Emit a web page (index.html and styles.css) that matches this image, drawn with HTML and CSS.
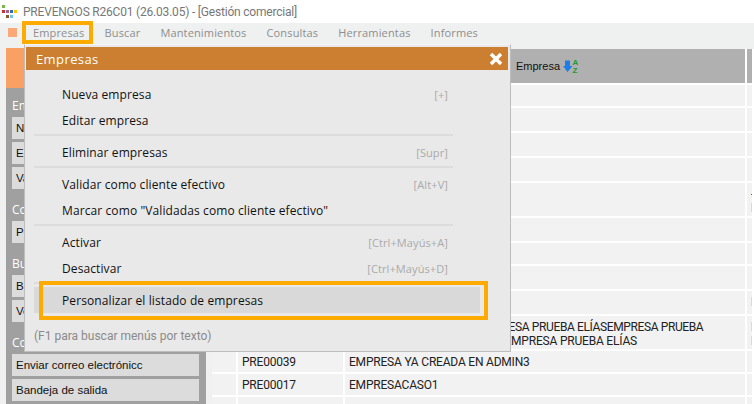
FILE: index.html
```html
<!DOCTYPE html>
<html lang="es">
  <head>
    <meta charset="UTF-8" />
    <title>PREVENGOS</title>
    <link rel="stylesheet" href="styles.css">
  </head>
  <body>
    <div class="titlebar">
      <svg class="logo" width="18" height="18" viewBox="0 0 18 18">
        <rect x="2" y="3" width="3" height="3" fill="#7ab648" />
        <rect x="2" y="8" width="3" height="3" fill="#c8332b" />
        <rect x="6" y="8" width="3" height="3" fill="#a0609c" />
        <rect x="10" y="8" width="3" height="3" fill="#2a6fa8" />
        <rect x="14" y="8" width="3" height="3" fill="#f8c800" />
        <rect x="6" y="13" width="3" height="3" fill="#8c5a2b" />
        <rect x="10" y="13" width="3" height="3" fill="#70c4ec" />
      </svg>
      <span>PREVENGOS R26C01 (26.03.05) - [Gestión comercial]</span>
    </div>

    <div class="menubar">
      <i class="menu-mark"></i>
      <span class="menu-item">Empresas</span>
      <span class="menu-item">Buscar</span>
      <span class="menu-item">Mantenimientos</span>
      <span class="menu-item">Consultas</span>
      <span class="menu-item">Herramientas</span>
      <span class="menu-item">Informes</span>
    </div>

    <div class="main">
      <div class="side">
        <div class="side-head"></div>
        <div class="side-body">
          <h6>Empresas</h6>
          <button>Nueva empresa</button>
          <button>Editar empresa</button>
          <button>Validar</button>
          <h6>Consultas</h6>
          <button>Personalizar</button>
          <h6>Buscar</h6>
          <button>Buscar</button>
          <button>Ver</button>
          <h6>Correo</h6>
          <button>Enviar correo electrónicc</button>
          <button>Bandeja de salida</button>
        </div>
      </div>

      <div class="grid">
        <div class="row head">
          <div></div><div></div>
          <div class="head-name">Empresa
            <svg class="sort" width="15" height="16" viewBox="0 0 15 16">
              <path d="M2 2.500h5v5.500h2.500l-5 6L0 8h2z" fill="#1e7ee8" />
              <text x="9.500" y="7" class="sort-az">A</text>
              <text x="9.500" y="15" class="sort-az">Z</text>
            </svg>
          </div>
          <div></div>
        </div>
        <div class="row h23"><div></div><div></div><div></div><div></div></div>
        <div class="row"><div></div><div></div><div></div><div></div></div>
        <div class="row"><div></div><div></div><div></div><div></div></div>
        <div class="row"><div></div><div></div><div></div><div></div></div>
        <div class="row h35"><div></div><div></div><div></div><div>-<br>P</div></div>
        <div class="row"><div></div><div></div><div></div><div></div></div>
        <div class="row h23"><div></div><div></div><div></div><div></div></div>
        <div class="row"><div></div><div></div><div></div><div></div></div>
        <div class="row"><div></div><div></div><div></div><div>E</div></div>
        <div class="row h35">
          <div></div><div></div>
          <div>
            <span class="line-one">EMPRESA PRUEBA ELÍASEMPRESA PRUEBA ELÍASEMPRESA PRUEBA</span>
            <span class="line-two">ELÍASEMPRESA PRUEBA EMPRESA PRUEBA ELÍAS</span>
          </div>
          <div>E<br>E</div>
        </div>
        <div class="row h23"><div></div><div>PRE00039</div><div>EMPRESA YA CREADA EN ADMIN3</div><div></div></div>
        <div class="row h23"><div></div><div>PRE00017</div><div>EMPRESACASO1</div><div></div></div>
        <div class="row h23"><div></div><div></div><div></div><div></div></div>
      </div>
    </div>

    <div class="popup">
      <div class="popup-title">
        <span>Empresas</span>
        <svg width="14" height="14" viewBox="0 0 14 14"><path d="M2 2l10 10M12 2L2 12" stroke="#fff" stroke-width="3.500" /></svg>
      </div>
      <div class="popup-body">
        <div class="group">
          <div class="opt"><span>Nueva empresa</span><kbd>[+]</kbd></div>
          <div class="opt"><span>Editar empresa</span></div>
        </div>
        <div class="group">
          <div class="opt"><span>Eliminar empresas</span><kbd>[Supr]</kbd></div>
        </div>
        <div class="group">
          <div class="opt"><span>Validar como cliente efectivo</span><kbd>[Alt+V]</kbd></div>
          <div class="opt"><span>Marcar como "Validadas como cliente efectivo"</span></div>
        </div>
        <div class="group">
          <div class="opt"><span>Activar</span><kbd>[Ctrl+Mayús+A]</kbd></div>
          <div class="opt"><span>Desactivar</span><kbd>[Ctrl+Mayús+D]</kbd></div>
        </div>
        <div class="opt selected"><span>Personalizar el listado de empresas</span></div>
        <div class="hint">(F1 para buscar menús por texto)</div>
      </div>
    </div>

    <div class="mark mark-menu"></div>
    <div class="mark mark-opt"></div>
  </body>
</html>
```

FILE: styles.css
```css
* {
  box-sizing: border-box;
}

html,
body {
  margin: 0;
  height: 404px;
  overflow: hidden;
}

body {
  position: relative;
  background: #f0f0f0;
  font-family: "Open Sans", sans-serif;
  font-size: 12px;
  color: #111;
}

.titlebar {
  display: flex;
  align-items: center;
  gap: 5px;
  height: 23px;
  background: #fff;
  color: #777;
  font-family: Roboto, sans-serif;
  font-size: 12px;
  letter-spacing: -0.2px;
}

.logo {
  align-self: flex-start;
  margin-top: 2px;
}

.menubar {
  display: flex;
  align-items: center;
  height: 24px;
  padding: 0 0 6px 8px;
  gap: 20px;
  background: #eff0f0;
  color: #8e8e8e;
  font-size: 11px;
  letter-spacing: 0.15px;
}

.menu-mark {
  width: 9px;
  height: 9px;
  margin-right: -4px;
  background: #fca877;
}

.main {
  display: flex;
  padding: 1px 0 0 6px;
}

.side {
  width: 200px;
  flex-shrink: 0;
}

.side-head {
  height: 40px;
  background: #f9a163;
}

.side-body {
  height: 316px;
  padding: 0 6px;
  background: #a0a0a0;
}

.side-body h6 {
  margin: 0;
  height: 29px;
  padding-top: 9px;
  color: #fff;
  font-size: 12px;
  font-weight: 400;
}

.side-body button {
  display: block;
  width: 187px;
  height: 22px;
  margin-bottom: 3px;
  padding: 0 0 0 4px;
  border: 0;
  background: #dcdcdc;
  color: #111;
  font: 11.500px "Liberation Sans", sans-serif;
  text-align: left;
}

.grid {
  flex: 1;
  margin-left: 6px;
  padding-top: 1px;
  color: #222;
  font-family: Roboto, sans-serif;
  font-size: 12px;
  letter-spacing: -0.2px;
}

.row {
  display: grid;
  grid-template-columns: 26px 107px 402px 1fr;
  height: 25px;
  border-bottom: 2px solid #fff;
}

.row > div {
  padding: 4px 0 0 4px;
  background: #f2f2f2;
  border-right: 2px solid #fff;
  line-height: 14px;
  white-space: nowrap;
  overflow: hidden;
}

.line-one,
.line-two {
  display: block;
}

.line-one {
  letter-spacing: -0.38px;
}

.line-two {
  padding-left: 23px;
}

.row.head {
  height: 36px;
}

.row.head > div {
  background: #b0b0b0;
}

.row.head > .head-name {
  display: flex;
  justify-content: center;
  align-items: center;
  gap: 3px;
  padding: 0 0 0 4px;
  color: #111;
  font: 11px "Liberation Sans", sans-serif;
  letter-spacing: 0;
}

.row.h23 {
  height: 23px;
}

.row.h35 {
  height: 35px;
}

.sort-az {
  fill: #1a9c2e;
  font: 700 8px "Liberation Sans", sans-serif;
}

.popup {
  position: absolute;
  left: 24px;
  top: 44px;
  width: 487px;
  height: 308px;
  padding: 2px 2px 0 1px;
  background: #e9e9e9;
  border: 1px solid #bdbdbd;
  border-top-color: #f4f4f4;
}

.popup-title {
  display: flex;
  justify-content: space-between;
  align-items: center;
  height: 23px;
  padding: 0 5px 0 10px;
  background: #cc7f30;
  color: #fff;
  font-size: 13px;
  letter-spacing: 0.4px;
}

.popup-body {
  padding: 11px 8px 0;
}

.group {
  width: 419px;
  padding-bottom: 1px;
  margin-bottom: 3px;
  border-bottom: 2px solid #dcdcdc;
}

.opt {
  display: flex;
  justify-content: space-between;
  align-items: center;
  height: 26px;
  padding: 0 5px 0 28px;
  color: #111;
  letter-spacing: 0.1px;
}

.opt kbd {
  color: #aaa;
  font: 11px "Open Sans", sans-serif;
}

.opt.selected {
  width: 446px;
  background: #d9d9d9;
}

.hint {
  margin-top: 16px;
  color: #8a8a8a;
  font-family: Roboto, sans-serif;
  font-size: 12px;
}

.mark {
  position: absolute;
  border: 4px solid #fdab00;
}

.mark-menu {
  left: 22px;
  top: 21px;
  width: 71px;
  height: 23px;
}

.mark-opt {
  left: 39px;
  top: 281px;
  width: 449px;
  height: 39px;
}
```
